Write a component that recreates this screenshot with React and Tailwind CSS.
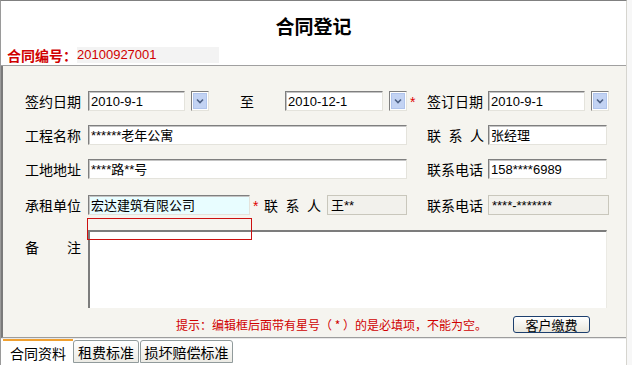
import React from "react";

const F = { fontFamily: "'Noto Sans CJK SC', 'Noto Sans', sans-serif" };
const FD = { fontFamily: "'Liberation Sans', 'Noto Sans CJK SC', sans-serif" };

function Input({ w, value, bg = "bg-white" }) {
  return (
    <div
      className={`${w} h-[20px] ${bg} border border-t-[#7f7f7f] border-l-[#7f7f7f] border-r-[#e4e3dc] border-b-[#e4e3dc] shadow-[inset_1px_1px_0_#c4c4c4] flex items-center pl-[2px] text-[13px] text-black leading-none overflow-hidden whitespace-nowrap`}
      style={FD}
    >
      {value}
    </div>
  );
}

function Disabled({ w, value }) {
  return (
    <div
      className={`${w} h-[20px] bg-[#f2f1ec] border border-[#c9c7bc] flex items-center pl-[3px] text-[13px] text-black leading-none whitespace-nowrap`}
      style={FD}
    >
      {value}
    </div>
  );
}

function DropBtn() {
  return (
    <div className="ml-[6px] w-[18px] h-[20px] border border-t-[#7f7f7f] border-l-[#7f7f7f] border-r-[#e4e3dc] border-b-[#e4e3dc] p-[1px] bg-white">
      <div className="w-full h-full bg-[#c3d3f3] border border-[#b0c4ec] flex items-center justify-center">
        <svg width="8" height="6" viewBox="0 0 8 6">
          <path d="M1 1.5 L4 4.5 L7 1.5" fill="none" stroke="#4d6185" strokeWidth="1.6" />
        </svg>
      </div>
    </div>
  );
}

function Label({ w, children }) {
  return (
    <div className={`${w} text-[14px] text-black leading-none whitespace-pre`} style={F}>
      {children}
    </div>
  );
}

function Spread({ w }) {
  return (
    <div className={`${w} flex`}>
      <div className="w-[57px] flex justify-between text-[14px] text-black leading-none" style={F}>
        <span>联</span>
        <span>系</span>
        <span>人</span>
      </div>
    </div>
  );
}

function Star({ w }) {
  return (
    <div className={`${w} text-[14px] text-[#e00000] leading-none pl-[3px] pt-[2px]`} style={FD}>
      *
    </div>
  );
}

export default function App() {
  return (
    <div className="w-[632px] h-[365px] bg-[#f7f7f7] relative overflow-hidden" style={F}>
      <div className="w-[627px] h-full flex flex-col border-t border-[#808080] border-l border-l-[#9a9a9a] border-r border-r-[#d6d5cf] bg-white">
        {/* header */}
        <div className="h-[65px] bg-white flex flex-col shrink-0 border-b border-[#a0a0a0]">
          <div className="mt-[10px] h-[30px] leading-[30px] text-center text-[19px] font-bold text-black">
            合同登记
          </div>
          <div className="mt-[6px] h-[16px] flex items-center">
            <span className="pl-[6px] text-[14px] font-bold text-[#d00000] leading-none">合同编号：</span>
            <span
              className="w-[142px] h-[16px] bg-[#f3f3f3] text-[13px] text-[#d00000] leading-[16px]"
              style={FD}
            >
              20100927001
            </span>
          </div>
        </div>

        {/* form panel */}
        <div className="h-[272px] shrink-0 bg-[#f5f4ef] border-l-2 border-[#7a7a7a] flex flex-col pl-[22px] pt-[25px] border-b border-b-[#9d9d9d]">
          {/* row 1 */}
          <div className="flex items-center h-[20px]">
            <Label w="w-[63px]">签约日期</Label>
            <Input w="w-[97px]" value="2010-9-1" />
            <DropBtn />
            <div className="w-[76px] text-center text-[14px] leading-none">至</div>
            <Input w="w-[98px]" value="2010-12-1" />
            <DropBtn />
            <Star w="w-[20px]" />
            <Label w="w-[61px]">签订日期</Label>
            <Input w="w-[97px]" value="2010-9-1" />
            <DropBtn />
          </div>
          {/* row 2 */}
          <div className="flex items-center h-[20px] mt-[14px]">
            <Label w="w-[63px]">工程名称</Label>
            <Input w="w-[319px]" value="******老年公寓" />
            <div className="w-[20px]" />
            <Spread w="w-[61px]" />
            <Input w="w-[119px]" value="张经理" />
          </div>
          {/* row 3 */}
          <div className="flex items-center h-[20px] mt-[14px]">
            <Label w="w-[63px]">工地地址</Label>
            <Input w="w-[319px]" value="****路**号" />
            <div className="w-[20px]" />
            <Label w="w-[61px]">联系电话</Label>
            <Input w="w-[119px]" value="158****6989" />
          </div>
          {/* row 4 */}
          <div className="flex items-center h-[20px] mt-[16px]">
            <Label w="w-[63px]">承租单位</Label>
            <Input w="w-[162px]" value="宏达建筑有限公司" bg="bg-[#e8fdff]" />
            <Star w="w-[14px]" />
            <Spread w="w-[63px]" />
            <Disabled w="w-[80px]" value="王**" />
            <div className="w-[20px]" />
            <Label w="w-[61px]">联系电话</Label>
            <Disabled w="w-[121px]" value="****-*******" />
          </div>
          {/* row 5 */}
          <div className="flex mt-[15px] h-[78px]">
            <div className="w-[63px] pt-[10px] flex text-[14px] leading-none">
              <span>备</span>
              <span className="ml-[28px]">注</span>
            </div>
            <div className="w-[519px] h-[78px] bg-white border-t-2 border-l-2 border-t-[#7c7c7c] border-l-[#7c7c7c] border-r border-r-[#ebeae4]" />
          </div>
          {/* hint row */}
          <div className="flex items-center mt-[8px] h-[17px]">
            <div className="ml-[151px] w-[337px] text-[12px] text-[#d00000] leading-none whitespace-nowrap">
              提示：编辑框后面带有星号（ * ）的是必填项，不能为空。
            </div>
            <div className="w-[77px] h-[17px] rounded-[3px] border border-[#1c3f6e] bg-gradient-to-b from-white to-[#e8e6dc] flex items-center justify-center text-[13px] leading-none text-black">
              客户缴费
            </div>
          </div>
        </div>

        {/* tabs */}
        <div className="flex items-end h-[26px] bg-white pl-[2px] border-t border-[#e8e8e8]">
          <div className="w-[70px] h-[25px] bg-white border-t-2 border-[#f0a030] flex items-center justify-center text-[14px] leading-none text-black">
            合同资料
          </div>
          <div className="w-[66px] h-[23px] mb-[1px] rounded-t-[3px] border border-[#919b9c] bg-gradient-to-b from-white to-[#ecebe5] flex items-center justify-center text-[14px] leading-none text-black">
            租费标准
          </div>
          <div className="ml-[1px] w-[93px] h-[23px] mb-[1px] rounded-t-[3px] border border-[#919b9c] bg-gradient-to-b from-white to-[#ecebe5] flex items-center justify-center text-[14px] leading-none text-black">
            损坏赔偿标准
          </div>
        </div>
      </div>

      {/* red highlight overlay */}
      <div className="absolute left-[87px] top-[218px] w-[165px] h-[22px] border border-[#cc1010]" />
    </div>
  );
}
